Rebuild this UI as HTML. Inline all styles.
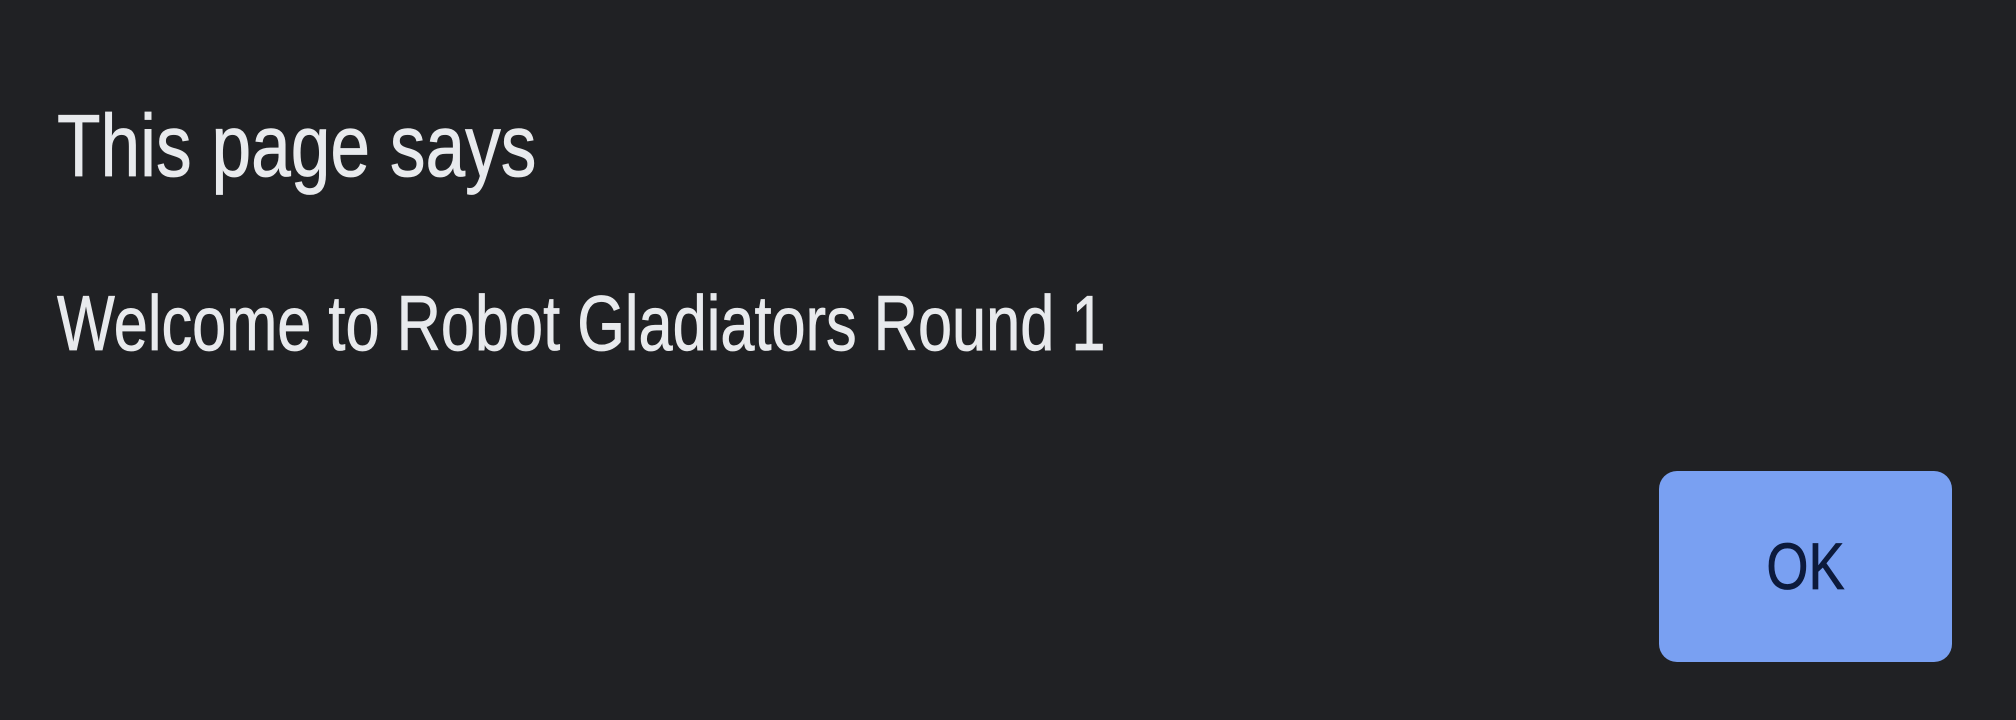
<!DOCTYPE html>
<html><head><style>
html,body{margin:0;padding:0;width:2016px;height:720px;background:#202124;overflow:hidden}
.t{position:absolute;font-family:"Liberation Sans",sans-serif;white-space:nowrap;transform-origin:0 0;color:#e8eaed;-webkit-text-stroke:0.8px #e8eaed}
#a{left:57px;top:96px;font-size:88px;line-height:100px;transform:scaleX(0.81)}
#b{left:57px;top:278px;font-size:78px;line-height:90px;transform:scaleX(0.786)}
#btn{position:absolute;left:1659px;top:471px;width:293px;height:191px;background:#79a0f2;border-radius:18px}
#ok{position:absolute;left:0;width:293px;top:0;line-height:191px;text-align:center;font-family:"Liberation Sans",sans-serif;font-size:66px;color:#0c1a3c;-webkit-text-stroke:0.8px #0c1a3c;transform:scaleX(0.82)}
</style></head><body>
<div class="t" id="a">This page says</div>
<div class="t" id="b">Welcome to Robot Gladiators Round 1</div>
<div id="btn"><div id="ok">OK</div></div>
</body></html>
